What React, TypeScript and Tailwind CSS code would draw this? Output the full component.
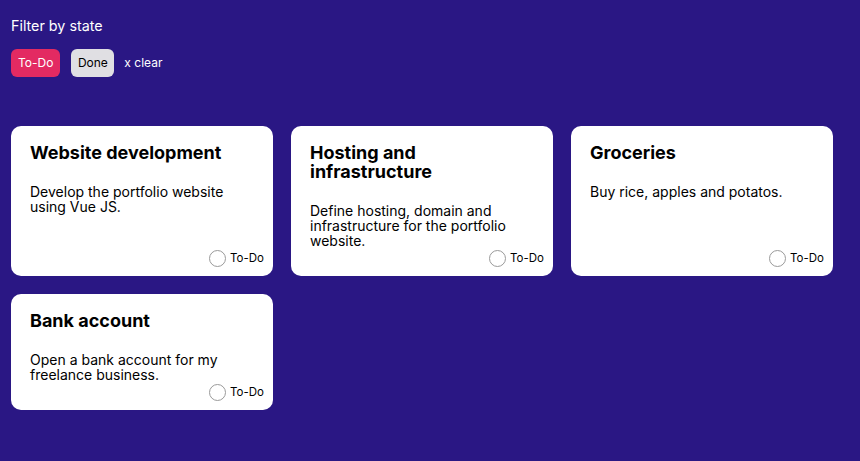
const tasks = [
  {
    title: "Website development",
    description: "Develop the portfolio website using Vue JS.",
  },
  {
    title: "Hosting and infrastructure",
    description: "Define hosting, domain and infrastructure for the portfolio website.",
  },
  {
    title: "Groceries",
    description: "Buy rice, apples and potatos.",
  },
  {
    title: "Bank account",
    description: "Open a bank account for my freelance business.",
  },
];

function TaskCard({ title, description }: { title: string; description: string }) {
  return (
    <div className="flex flex-col rounded-[10px] bg-white pb-[8px] pl-[19px] pr-[9px] pt-[17px] text-black">
      <h2 className="pr-[10px] text-[18px] font-bold leading-[19px]">{title}</h2>
      <p className="mt-[22px] pr-[10px] text-[14px] leading-[15px]">{description}</p>
      <div className="mt-auto flex items-center justify-end gap-[4px]">
        <span className="ml-[2px] h-[17px] w-[17px] rounded-full border border-[#9a9a9a] bg-white" />
        <span className="text-[11.5px] leading-[20px]">To-Do</span>
      </div>
    </div>
  );
}

export default function App() {
  return (
    <div
      className="min-h-screen bg-[#2a1784] px-[11px] pt-[16px] text-white"
      style={{ fontFamily: "Inter, 'Noto Sans', sans-serif" }}
    >
      <h1 className="text-[14.3px] leading-[20px]">Filter by state</h1>
      <div className="mt-[13px] flex items-center gap-[11px]">
        <button className="h-[28px] rounded-[6px] bg-[#e32a62] px-[7px] text-[12px] text-white">
          To-Do
        </button>
        <button className="h-[28px] rounded-[6px] bg-[#e0dfe3] px-[6.5px] text-[12px] text-black">
          Done
        </button>
        <button className="-ml-[1px] text-[12px] text-white">x clear</button>
      </div>
      <div className="mt-[49px] grid grid-cols-[262px_262px_262px] gap-[18px]">
        {tasks.map((t) => (
          <TaskCard key={t.title} title={t.title} description={t.description} />
        ))}
      </div>
    </div>
  );
}
